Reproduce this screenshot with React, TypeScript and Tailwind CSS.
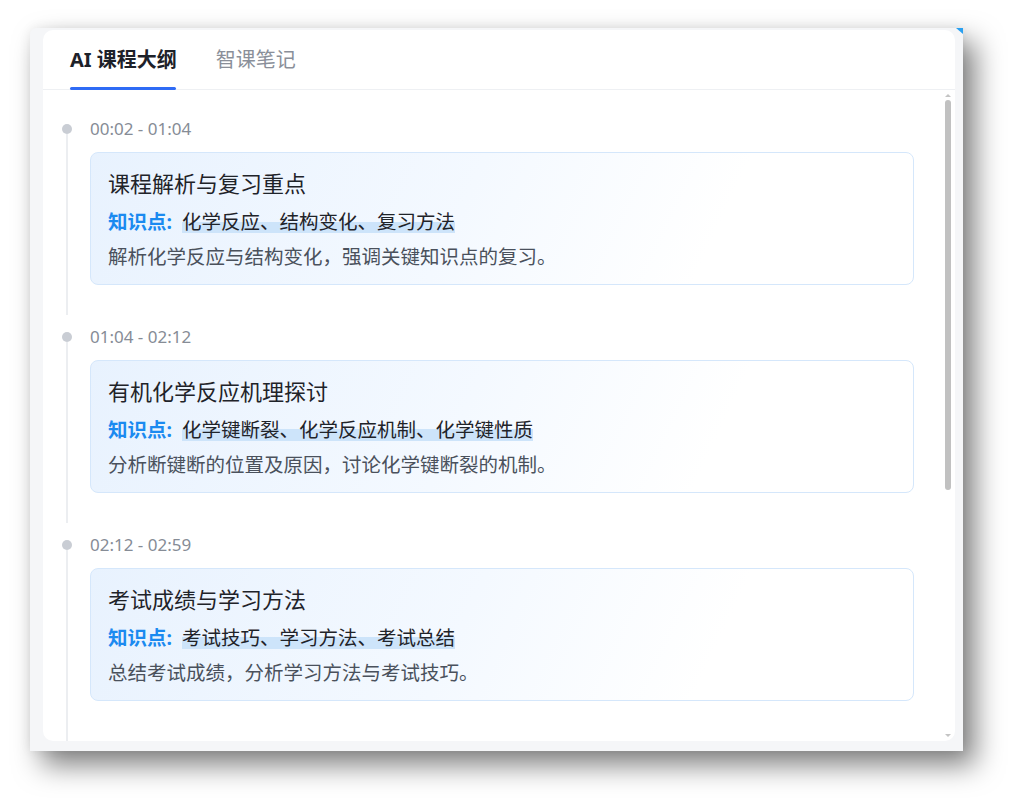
const items = [
  {
    time: '00:02 - 01:04',
    title: '课程解析与复习重点',
    points: '化学反应、结构变化、复习方法',
    desc: '解析化学反应与结构变化，强调关键知识点的复习。',
  },
  {
    time: '01:04 - 02:12',
    title: '有机化学反应机理探讨',
    points: '化学键断裂、化学反应机制、化学键性质',
    desc: '分析断键断的位置及原因，讨论化学键断裂的机制。',
  },
  {
    time: '02:12 - 02:59',
    title: '考试成绩与学习方法',
    points: '考试技巧、学习方法、考试总结',
    desc: '总结考试成绩，分析学习方法与考试技巧。',
  },
];

function OutlineItem({ item, last }: { item: (typeof items)[number]; last: boolean }) {
  return (
    <div className="flex gap-[18px]">
      <div className="flex w-[10px] flex-col items-center">
        <div className="mt-[5px] h-[10px] w-[10px] shrink-0 rounded-full bg-[#c9cdd4]" />
        <div className="w-[2px] flex-1 bg-[#eceef1]" />
      </div>
      <div className={`flex-1 ${last ? 'pb-[40px]' : 'pb-[30px]'}`}>
        <div className="text-[17px] leading-[20px] text-[#868c96]">{item.time}</div>
        <div className="mt-[13px] rounded-[8px] border border-[#d5e7fb] bg-[linear-gradient(115deg,#e8f2fe_0%,#f4f9ff_45%,#ffffff_75%)] px-[17px] pt-[15px] pb-[13px]">
          <div className="text-[22px] leading-[30px] text-[#1f2329]">{item.title}</div>
          <div className="mt-[10px] text-[19.5px] leading-[28px] text-[#1f2329]">
            <span className="mr-[10px] font-bold text-[#1b8af0]">知识点:</span>
            <span className="bg-[linear-gradient(transparent_50%,#cde4fa_50%,#cde4fa_92%,transparent_92%)]">
              {item.points}
            </span>
          </div>
          <div className="mt-[7px] text-[19.5px] leading-[28px] text-[#4a515c]">{item.desc}</div>
        </div>
      </div>
    </div>
  );
}

export default function App() {
  return (
    <div
      className="h-[812px] w-[1024px] bg-white pt-[28px] pl-[30px]"
      style={{ fontFamily: '"Noto Sans", "Noto Sans CJK SC", sans-serif' }}
    >
      <div className="relative h-[723px] w-[933px] rounded-tl-[6px] bg-[#f5f6f8] pt-[2px] pr-[8px] pb-[10px] pl-[13px] shadow-[0_0_12px_rgba(0,0,0,0.07),12px_14px_28px_rgba(0,0,0,0.5)]">
        <div className="absolute top-0 right-0 h-0 w-0 border-t-[6px] border-l-[7px] border-t-[#2aa0f0] border-l-transparent" />
        <div className="flex h-full flex-col overflow-hidden rounded-[10px] bg-white">
          <div className="flex h-[60px] shrink-0 items-stretch gap-[39px] border-b border-[#eef0f3] pl-[27px]">
            <div className="relative flex items-center text-[20px] font-bold text-[#1d2129]">
              AI 课程大纲
              <div className="absolute bottom-[-1px] left-0 h-[3px] w-[106px] rounded-full bg-[#2f6bf5]" />
            </div>
            <div className="flex items-center text-[20px] text-[#8a8f99]">智课笔记</div>
          </div>
          <div className="flex min-h-0 flex-1">
            <div className="flex-1 overflow-hidden pt-[29px] pl-[19px] pr-[29px]">
              <div className="flex flex-col gap-[12px]">
                {items.map((item, i) => (
                  <OutlineItem key={item.time} item={item} last={i === items.length - 1} />
                ))}
              </div>
            </div>
            <div className="flex w-[12px] flex-col items-center pr-[2px] pt-[4px] pb-[4px]">
              <div className="h-0 w-0 border-r-[3px] border-b-[3px] border-l-[3px] border-r-transparent border-b-[#c4c4c4] border-l-transparent" />
              <div className="mt-[3px] h-[390px] w-[6px] rounded-full bg-[#c1c1c1]" />
              <div className="flex-1" />
              <div className="h-0 w-0 border-t-[3px] border-r-[3px] border-l-[3px] border-t-[#c4c4c4] border-r-transparent border-l-transparent" />
            </div>
          </div>
        </div>
      </div>
    </div>
  );
}
